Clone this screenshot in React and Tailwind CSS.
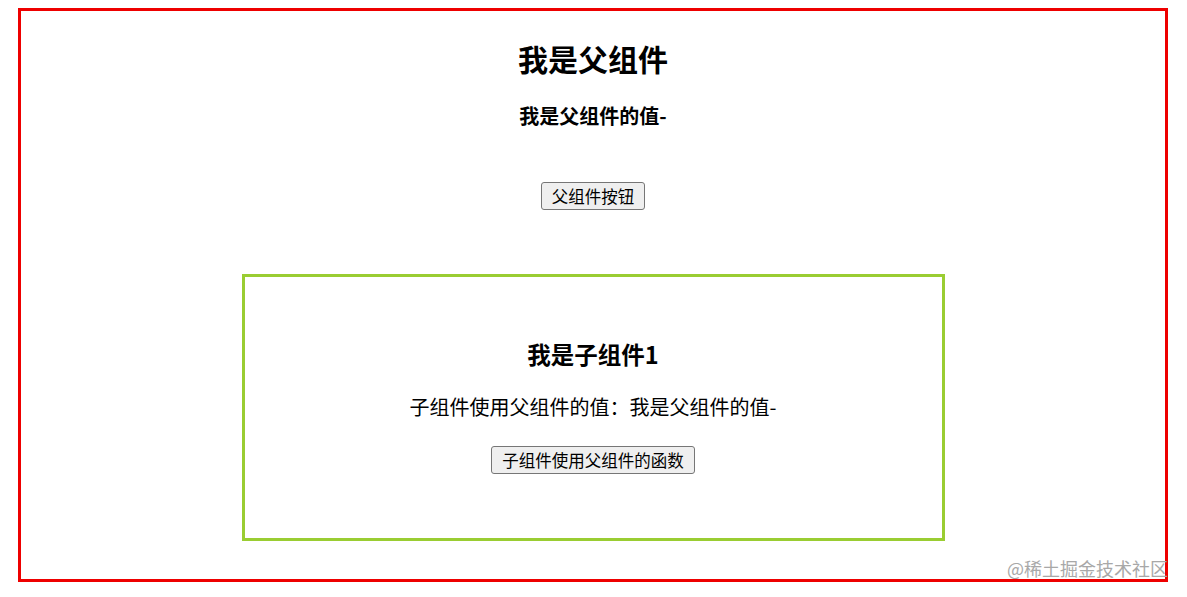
export default function App() {
  const font = { fontFamily: '"Microsoft YaHei", "Noto Sans CJK SC", "Noto Sans", sans-serif' };
  return (
    <div className="relative w-[1187px] h-[597px] bg-white text-black" style={font}>
      <div className="ml-[18px] mr-[19px] pt-[8px]">
        <div className="h-[574px] border-[3px] border-[#ee0000] flex flex-col items-center">
          <h1 className="mt-[29px] text-[30px] leading-[36px] font-bold">我是父组件</h1>
          <h3 className="mt-[26px] text-[20px] leading-[28px] font-bold">我是父组件的值-</h3>
          <button className="mt-[52px] h-[28px] px-[10px] text-[16.5px] leading-[20px] bg-[#efefef] border border-[#767676] rounded-[3px]">
            父组件按钮
          </button>
          <div className="mt-[64px] w-[703px] h-[267px] border-[3px] border-[#9acd32] flex flex-col items-center">
            <h3 className="mt-[61px] text-[23.5px] leading-[32px] font-bold">我是子组件1</h3>
            <p className="mt-[23px] text-[20px] leading-[28px]">子组件使用父组件的值：我是父组件的值-</p>
            <button className="mt-[25px] h-[28px] px-[10px] text-[16.5px] leading-[20px] bg-[#efefef] border border-[#767676] rounded-[3px]">
              子组件使用父组件的函数
            </button>
          </div>
        </div>
      </div>
      <div className="absolute right-[19px] top-[555px] text-[18px] leading-[26px] text-[#a8a8a8]">@稀土掘金技术社区</div>
    </div>
  );
}
